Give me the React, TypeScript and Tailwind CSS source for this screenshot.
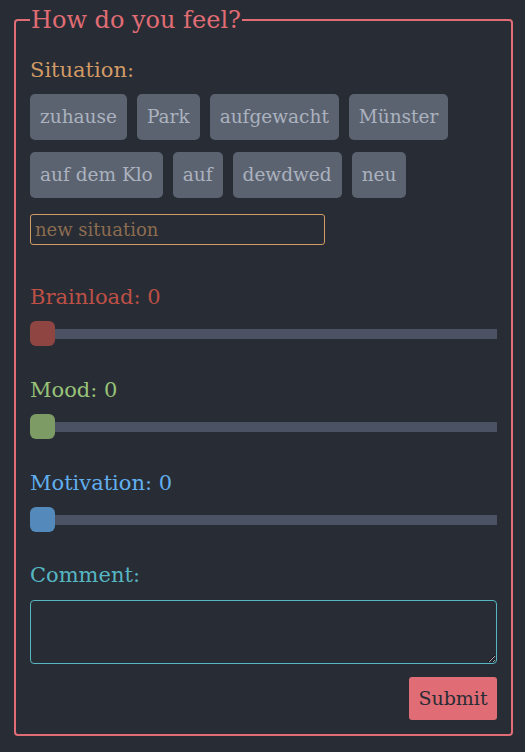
import React from "react";

const chips = ["zuhause", "Park", "aufgewacht", "Münster", "auf dem Klo", "auf", "dewdwed", "neu"];

function Slider({ label, text, thumb, first }: { label: string; text: string; thumb: string; first?: boolean }) {
  return (
    <div className={first ? "mt-[40px]" : "mt-[32px]"}>
      <div className={`text-[21px] leading-[24px] ${text}`}>{label}: 0</div>
      <div className="mt-[12px] flex h-[25px] items-center">
        <div className={`h-[25px] w-[25px] rounded-[6px] ${thumb}`} />
        <div className="h-[10px] flex-1 bg-[#4b5263]" />
      </div>
    </div>
  );
}

export default function App() {
  return (
    <div className="min-h-[752px] bg-[#282c34] pt-[6px] pb-[16px]" style={{ fontFamily: '"DejaVu Serif", serif' }}>
      <fieldset className="ml-[14px] w-[499px] rounded-[4px] border-2 border-[#e06c75] px-[14px] pt-[24px] pb-[14px]">
        <legend className="px-px text-[24px] leading-[28px] text-[#e06c75]">How do you feel?</legend>
        <div className="text-[21px] leading-[24px] text-[#d19a66]">Situation:</div>
        <div className="mt-[12px] flex flex-wrap gap-x-[10px] gap-y-[12px]">
          {chips.map((c) => (
            <button key={c} className="h-[46px] rounded-[5px] bg-[#5c6370] px-[10px] text-[18.5px] text-[#abb2bf]">
              {c}
            </button>
          ))}
        </div>
        <input
          className="mt-[16px] block h-[31px] w-[295px] rounded-[3px] border border-[#d19a66] bg-transparent px-[4px] text-[18px] text-[#d19a66] outline-none placeholder:text-[#d19a66]/60"
          placeholder="new situation"
        />
        <Slider label="Brainload" text="text-[#be5046]" thumb="bg-[#8f4541]" first />
        <Slider label="Mood" text="text-[#98c379]" thumb="bg-[#7d9c65]" />
        <Slider label="Motivation" text="text-[#61afef]" thumb="bg-[#5389bb]" />
        <div className="mt-[31px] text-[21px] leading-[24px] text-[#56b6c2]">Comment:</div>
        <textarea className="mt-[13px] block h-[64px] w-full rounded-[4px] border border-[#56b6c2] bg-transparent text-[#abb2bf] outline-none" />
        <div className="mt-[13px] flex justify-end">
          <button className="h-[43px] w-[88px] rounded-[3px] bg-[#e06c75] text-[19px] text-[#282c34]">Submit</button>
        </div>
      </fieldset>
    </div>
  );
}
